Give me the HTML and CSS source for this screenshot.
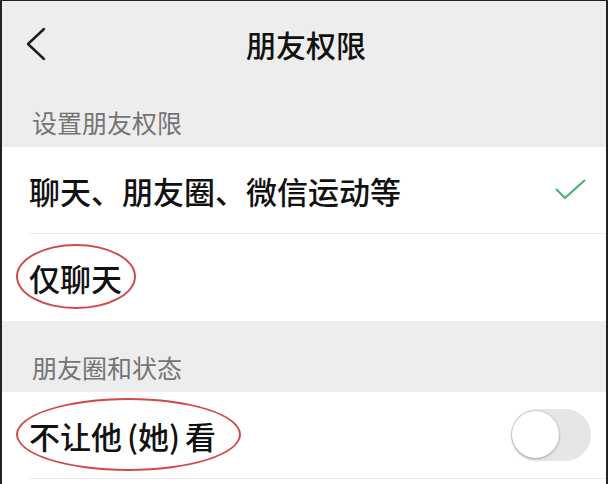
FILE: index.html
```html
<!DOCTYPE html>
<html lang="zh-CN">
<head>
    <meta charset="UTF-8">
    <meta name="viewport" content="width=device-width, initial-scale=1.0">
    <title>朋友权限</title>
    <link rel="stylesheet" href="styles.css">
</head>
<body>
    <div class="screen">
        <!-- Nav bar -->
        <div class="navbar">
            <svg class="back" width="22" height="34" viewBox="0 0 22 34">
                <polyline points="19,2 3,17 19,32" fill="none" stroke="#1a1a1a" stroke-width="2.4" stroke-linecap="round" stroke-linejoin="round"/>
            </svg>
            <h1 class="nav-title">朋友权限</h1>
        </div>

        <div class="group-title first">设置朋友权限</div>
        <div class="group">
            <div class="cell">
                <div class="cell-body divided">
                    <span class="cell-text">聊天、朋友圈、微信运动等</span>
                    <svg class="check" width="32" height="22" viewBox="0 0 32 22">
                        <polyline points="1,10 10,19 30,1" fill="none" stroke="#4db36e" stroke-width="2.2"/>
                    </svg>
                </div>
            </div>
            <div class="cell">
                <div class="cell-body">
                    <span class="cell-text marked">仅聊天<span class="ring ring-short"></span></span>
                </div>
            </div>
        </div>

        <div class="group-title second">朋友圈和状态</div>
        <div class="group">
            <div class="cell">
                <div class="cell-body divided">
                    <span class="cell-text marked tight">不让他 (她) 看<span class="ring ring-long"></span></span>
                    <div class="switch"><div class="knob"></div></div>
                </div>
            </div>
        </div>
    </div>
</body>
</html>
```

FILE: styles.css
```css
body {
    margin: 0;
    font-family: "Noto Sans CJK SC", "Noto Sans", sans-serif;
    color: #111;
}

.screen {
    width: 608px;
    height: 484px;
    box-sizing: border-box;
    border-top: 1px solid #222;
    border-left: 2px solid #222;
    border-right: 2px solid #222;
    background-color: #fff;
    overflow: hidden;
}

.navbar {
    position: relative;
    height: 86px;
    display: flex;
    align-items: center;
    justify-content: center;
    background-color: #ededed;
}

.back {
    position: absolute;
    left: 23px;
    top: 26px;
}

.nav-title {
    margin: 0;
    font-size: 30px;
    font-weight: 500;
    line-height: 1;
    color: #111;
    padding-left: 4px;
}

.group-title {
    background-color: #ededed;
    color: #747474;
    font-size: 25px;
    line-height: 26px;
    padding-left: 30px;
    box-sizing: border-box;
}

.group-title.first {
    height: 60px;
    padding-top: 22px;
}

.group-title.second {
    height: 71px;
    padding-top: 33px;
}

.cell {
    padding-left: 27px;
}

.cell-body {
    height: 87px;
    box-sizing: border-box;
    display: flex;
    align-items: center;
    justify-content: space-between;
    padding-right: 15px;
}

.cell-body.divided {
    border-bottom: 1px solid #ececec;
}

.cell-text {
    font-size: 31px;
    font-weight: 500;
    line-height: 1;
}

.cell-text.tight {
    word-spacing: -2px;
}

.marked {
    position: relative;
}

.ring {
    position: absolute;
    border: 2px solid #cf4b4b;
    border-radius: 50%;
}

.ring-short {
    left: -13px;
    top: -18px;
    width: 116px;
    height: 61px;
}

.ring-long {
    left: -13px;
    top: -22px;
    width: 221px;
    height: 69px;
}

.check {
    margin-right: 4px;
}

.switch {
    width: 80px;
    height: 52px;
    border-radius: 26px;
    background-color: #e6e6e6;
    position: relative;
}

.knob {
    position: absolute;
    left: 1px;
    top: 2px;
    width: 47px;
    height: 47px;
    border-radius: 50%;
    background-color: #fff;
    box-shadow: 0 0 0 1px rgba(0, 0, 0, 0.06), 0 1px 3px rgba(0, 0, 0, 0.25);
}
```
